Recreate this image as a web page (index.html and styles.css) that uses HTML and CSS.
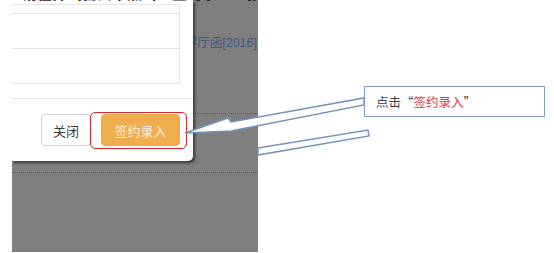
FILE: index.html
```html
<!DOCTYPE html>
<html lang="zh-CN">
<head>
<meta charset="utf-8">
<title>签约录入</title>
<link rel="stylesheet" href="styles.css">
</head>
<body>
<div class="page">
  <div class="shot">
    <div class="bg-content">
      <div class="ref-row"><span class="ref-link">学厅函[2016]</span></div>
      <div class="dots dots-a"></div>
      <div class="dots dots-b"></div>
    </div>
    <div class="modal">
      <div class="modal-body">
        <div class="tbl">
          <div class="tr tr-short"></div>
          <div class="tr"></div>
          <div class="tr"></div>
        </div>
      </div>
      <div class="modal-footer">
        <button class="btn btn-default">关闭</button>
        <button class="btn btn-warning">签约录入</button>
      </div>
    </div>
    <div class="doc-text">请在弹出窗口中点击“签约录入”按钮，完成协议的录入与提交</div>
    <div class="highlight"></div>
  </div>
  <svg class="arrows" width="554" height="253" viewBox="0 0 554 253">
    <polygon points="185,133 228,118 231,122 364,98 364,105 231,131" fill="#ffffff" stroke="#7393bd" stroke-width="1.5" stroke-linejoin="miter"/>
    <polygon points="258,148 368,130 369,136 258,155" fill="#ffffff" stroke="#7393bd" stroke-width="1.5"/>
  </svg>
  <div class="callout">点击<span class="q">“</span><span class="red">签约录入</span><span class="q">”</span></div>
</div>
</body>
</html>
```
FILE: styles.css
```css
html, body {
  margin: 0;
  padding: 0;
  background: #ffffff;
}

.page {
  position: relative;
  width: 554px;
  height: 253px;
  overflow: hidden;
  font-family: "Liberation Sans", "Noto Sans CJK SC", sans-serif;
}

.shot {
  position: relative;
  margin-left: 12px;
  width: 246px;
  height: 252px;
  background: #7f7f7f;
  overflow: hidden;
}

.bg-content {
  display: flex;
  flex-direction: column;
  padding-top: 35px;
}

.ref-row {
  display: flex;
  justify-content: flex-end;
  padding-right: 1px;
  height: 17px;
}

.ref-link {
  font-size: 12.5px;
  line-height: 17px;
  color: #3b5a82;
}

.dots {
  border-top: 1px dotted #5b5463;
}

.dots-a {
  margin-top: 61px;
}

.dots-b {
  margin-top: 58px;
}

.modal {
  position: absolute;
  top: 0;
  left: 0;
  width: 181px;
  height: 161px;
  background: #ffffff;
  border-radius: 0 0 5px 0;
  box-shadow: 2px 2px 3px rgba(0, 0, 0, 0.55);
  display: flex;
  flex-direction: column;
}

.modal-body {
  padding: 4px 13px 14px 0;
}

.tbl {
  border-top: 1px solid #e4e4e4;
  border-right: 1px solid #e4e4e4;
}

.tr {
  height: 34px;
  border-bottom: 1px solid #e4e4e4;
}

.tr-short {
  height: 8px;
}

.modal-footer {
  border-top: 1px solid #e5e5e5;
  padding: 15px 13px 0 0;
  display: flex;
  justify-content: flex-end;
  gap: 10px;
}

.btn {
  height: 32px;
  border-radius: 4px;
  font-family: "Noto Sans CJK SC", sans-serif;
  font-size: 13px;
  padding: 0;
  margin: 0;
}

.btn-default {
  width: 50px;
  background: #ffffff;
  border: 1px solid #d0d0d0;
  color: #333333;
}

.btn-warning {
  width: 79px;
  background: #f0ad4e;
  border: 1px solid #eea847;
  color: #fdf1de;
}

.doc-text {
  position: absolute;
  top: -15px;
  left: 10px;
  white-space: nowrap;
  font-family: "Noto Sans CJK SC", sans-serif;
  font-size: 15px;
  line-height: 16px;
  font-weight: 700;
  color: #1a1a1a;
}

.highlight {
  position: absolute;
  left: 78px;
  top: 112px;
  width: 95px;
  height: 35px;
  border: 1.5px solid #e0202a;
  border-radius: 5px;
}

.arrows {
  position: absolute;
  left: 0;
  top: 0;
}

.callout {
  position: absolute;
  left: 364px;
  top: 86px;
  width: 168px;
  height: 29px;
  border: 1.5px solid #7d9dc6;
  background: #ffffff;
  display: flex;
  align-items: center;
  padding-left: 11px;
  box-sizing: content-box;
  font-family: "Noto Sans CJK SC", sans-serif;
  font-size: 12.5px;
  color: #404040;
}

.callout .q {
  color: #404040;
}

.callout .red {
  color: #e5343c;
}
```
